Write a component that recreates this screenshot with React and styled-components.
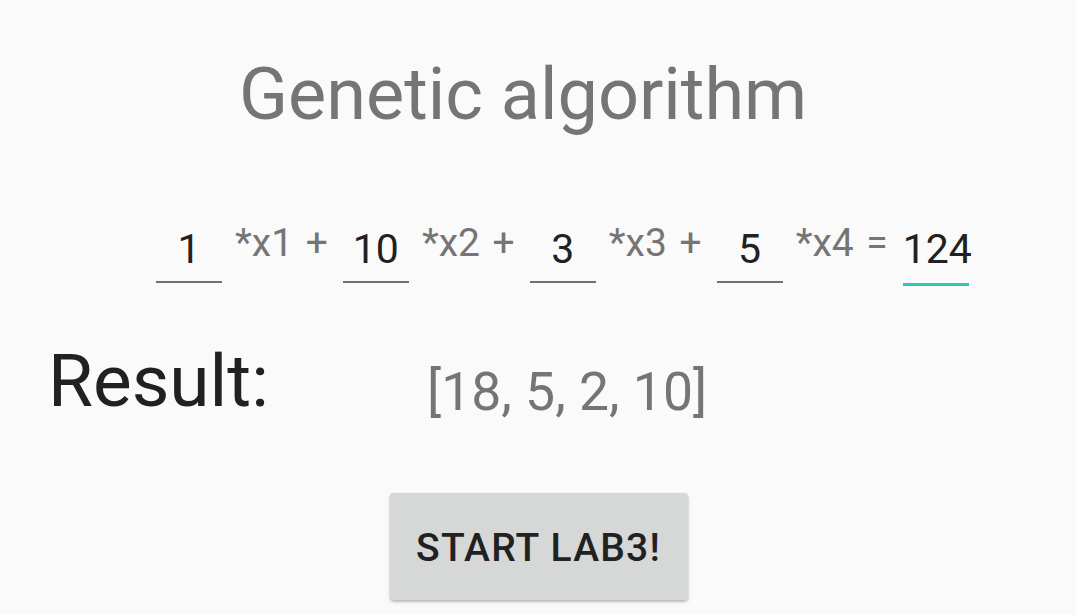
import React from "react";
import styled, { createGlobalStyle } from "styled-components";

const Global = createGlobalStyle`
  html, body { margin: 0; padding: 0; background: #fafafa; }
  body { font-family: Roboto, "Noto Sans", sans-serif; }
`;

const Screen = styled.div`
  width: 1076px;
  height: 615px;
  overflow: hidden;
  background: #fafafa;
  display: flex;
  flex-direction: column;
`;

const Title = styled.h1`
  margin: 59px 0 0 239px;
  font-size: 72px;
  line-height: 1;
  font-weight: 400;
  color: #757575;
  white-space: nowrap;
`;

const Equation = styled.div`
  display: flex;
  align-items: flex-start;
  gap: 13px;
  margin: 93px 0 0 156px;
`;

const Field = styled.div`
  width: 66px;
  margin-top: 5px;
  padding-bottom: ${(p) => (p.$focused ? "13px" : "11px")};
  border-bottom: ${(p) => (p.$focused ? "3px solid #2cc7b7" : "2px solid #707070")};
  font-size: 41px;
  line-height: 1;
  color: #212121;
  text-align: center;
`;

const Term = styled.span`
  margin-right: 2px;
  font-size: 39px;
  word-spacing: 3px;
  line-height: 1;
  color: #757575;
  white-space: nowrap;
`;

const ResultRow = styled.div`
  display: flex;
  align-items: baseline;
  margin: 59px 0 0 48px;
`;

const ResultLabel = styled.div`
  font-size: 73px;
  line-height: 1;
  color: #212121;
  width: 379px;
`;

const ResultValue = styled.div`
  font-size: 53.5px;
  line-height: 1;
  color: #757575;
  position: relative;
  top: 4px;
`;

const ButtonWrap = styled.div`
  display: flex;
  justify-content: center;
  margin-top: 75px;
`;

const Button = styled.button`
  width: 298px;
  height: 107px;
  margin-left: 1px;
  border: none;
  border-radius: 4px;
  background: #d6d7d7;
  box-shadow: 0 2px 3px rgba(0, 0, 0, 0.25), 0 0 2px rgba(0, 0, 0, 0.08);
  font-family: Roboto, "Noto Sans", sans-serif;
  font-weight: 500;
  font-size: 39px;
  letter-spacing: 1.2px;
  color: #212121;
  padding: 2px 0 0 0;
`;

const coeffs = [
  { v: "1", t: "*x1 +" },
  { v: "10", t: "*x2 +" },
  { v: "3", t: "*x3 +" },
  { v: "5", t: "*x4 =" },
];

export default function App() {
  return (
    <>
      <Global />
      <Screen>
        <Title>Genetic algorithm</Title>
        <Equation>
          {coeffs.map((c) => (
            <React.Fragment key={c.t}>
              <Field>{c.v}</Field>
              <Term>{c.t}</Term>
            </React.Fragment>
          ))}
          <Field $focused>124</Field>
        </Equation>
        <ResultRow>
          <ResultLabel>Result:</ResultLabel>
          <ResultValue>[18, 5, 2, 10]</ResultValue>
        </ResultRow>
        <ButtonWrap>
          <Button>START LAB3!</Button>
        </ButtonWrap>
      </Screen>
    </>
  );
}
